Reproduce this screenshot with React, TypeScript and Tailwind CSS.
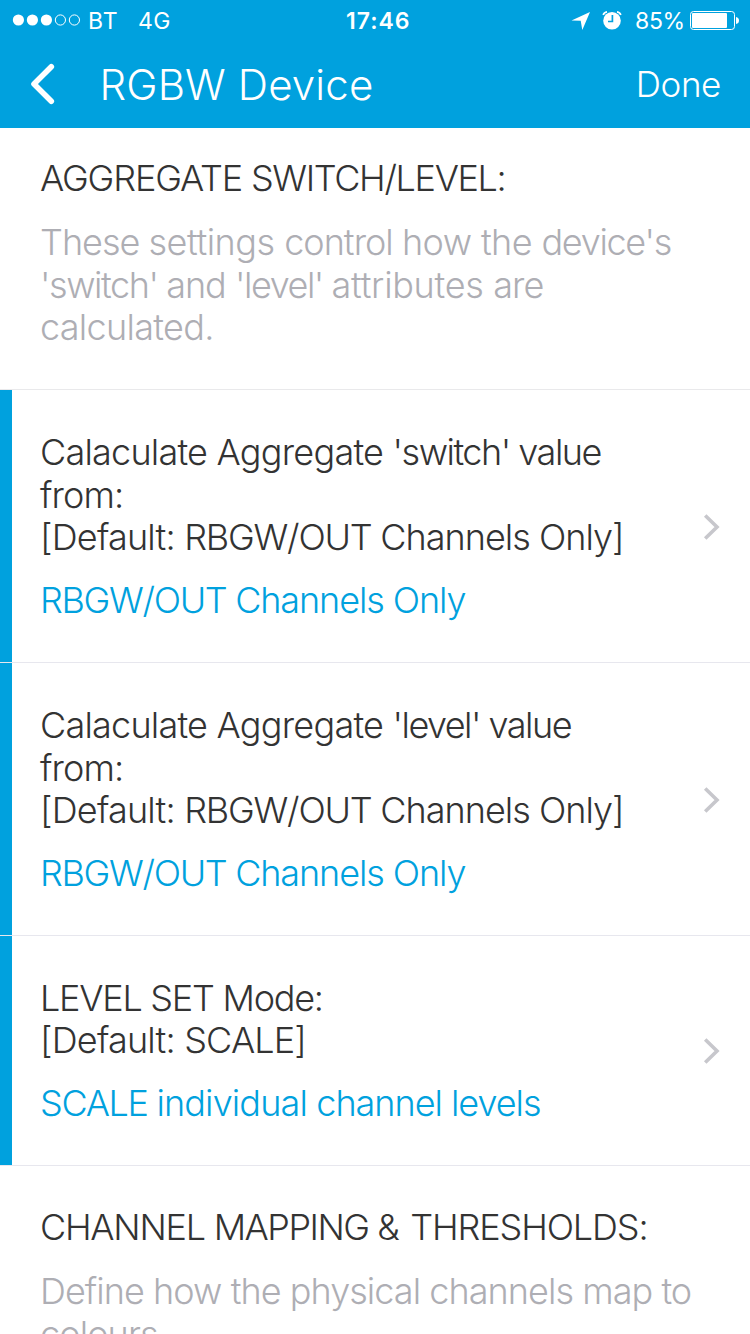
import React from "react";

type Run = [text: string, tracking: string];
type TextLine = Run[];

const AGGREGATE_TITLE: TextLine[] = [
  [["AGGREGATE ", "tracking-[-1.17px]"], ["SWITCH/LEVEL:", "tracking-[-1.35px]"]],
];
const AGGREGATE_TEXT: TextLine[] = [
  [
    ["These ", "tracking-[-1px]"],
    ["settings ", "tracking-[-0.5px]"],
    ["control ", "tracking-[-0.97px]"],
    ["how the ", "tracking-[-0.6px]"],
    ["device's", "tracking-[-1.3px]"],
  ],
  [
    ["'switch' ", "tracking-[-1.45px]"],
    ["and ", "tracking-[-1px]"],
    ["'level' ", "tracking-[-1.45px]"],
    ["attributes ", "tracking-[-0.3px]"],
    ["are", "tracking-[-1px]"],
  ],
  [["calculated.", "tracking-[-0.7px]"]],
];
const CHANNEL_TITLE: TextLine[] = [
  [
    ["CHANNEL ", "tracking-[-1.25px]"],
    ["MAPPING ", "tracking-[-1.5px]"],
    ["& ", "tracking-[0.2px]"],
    ["THRESHOLDS:", "tracking-[-1.12px]"],
  ],
];
const CHANNEL_TEXT: TextLine[] = [
  [["Define how the physical channels map to", "tracking-[-0.95px]"]],
  [["colours.", "tracking-[-0.9px]"]],
];

const FROM: TextLine = [["from:", "tracking-[-0.9px]"]];
const DEFAULT_CHANNELS: TextLine = [
  ["[Default: ", "tracking-[-0.8px]"],
  ["RBGW/OUT ", "tracking-[-1.22px]"],
  ["Channels Only]", "tracking-[-1px]"],
];
const CHANNELS_ONLY: TextLine[] = [
  [["RBGW/OUT ", "tracking-[-1.33px]"], ["Channels Only", "tracking-[-1.1px]"]],
];

const SETTINGS: { label: TextLine[]; value: TextLine[]; row: string; body: string; arrow: string }[] = [
  {
    label: [
      [
        ["Calaculate ", "tracking-[-0.78px]"],
        ["Aggregate ", "tracking-[-0.75px]"],
        ["'switch' ", "tracking-[-1.5px]"],
        ["value", "tracking-[-1.45px]"],
      ],
      FROM,
      DEFAULT_CHANNELS,
    ],
    value: CHANNELS_ONLY,
    row: "h-[273px]",
    body: "pt-[41px]",
    arrow: "pt-0.5",
  },
  {
    label: [
      [
        ["Calaculate ", "tracking-[-0.78px]"],
        ["Aggregate ", "tracking-[-0.75px]"],
        ["'level' ", "tracking-[-1.55px]"],
        ["value", "tracking-[-1.45px]"],
      ],
      FROM,
      DEFAULT_CHANNELS,
    ],
    value: CHANNELS_ONLY,
    row: "h-[273px]",
    body: "pt-[41px]",
    arrow: "pt-0.5",
  },
  {
    label: [
      [["LEVEL SET Mode:", "tracking-[-1.25px]"]],
      [["[Default: ", "tracking-[-0.8px]"], ["SCALE]", "tracking-[-0.85px]"]],
    ],
    value: [[["SCALE ", "tracking-[-1.35px]"], ["individual ", "tracking-[-0.85px]"], ["channel levels", "tracking-[-1.03px]"]]],
    row: "h-[230px]",
    body: "pt-[40.6px]",
    arrow: "pt-0",
  },
];

function Lines({ lines, className }: { lines: TextLine[]; className: string }) {
  return (
    <div className={className}>
      {lines.map((line, i) => (
        <div key={i}>
          {line.map(([text, tracking]) => (
            <span key={text} className={tracking}>
              {text}
            </span>
          ))}
        </div>
      ))}
    </div>
  );
}

function StatusBar() {
  return (
    <div className="flex h-10 items-center text-[23px] leading-[40px] font-normal">
      <svg className="ml-3 h-3 w-[70px] shrink-0" viewBox="0 0 70 12">
        <g fill="#fff">
          <circle cx="6.4" cy="6" r="5.6" />
          <circle cx="20.4" cy="6" r="5.6" />
          <circle cx="34.4" cy="6" r="5.6" />
        </g>
        <g fill="none" stroke="#fff">
          <circle cx="48.4" cy="6" r="5.1" />
          <circle cx="62.4" cy="6" r="5.1" />
        </g>
      </svg>
      <span className="ml-[6px] w-[50px] pt-0.5 tracking-[0.9px]">BT</span>
      <span className="w-[208px] pt-0.5 tracking-[0.4px]">4G</span>
      <span className="w-[225px] pt-0.5 font-semibold tracking-[1px]">17:46</span>
      <svg className="h-5 w-[19px] shrink-0" viewBox="0 0 19 20" fill="#fff">
        <path d="M0.5 10.5 19 2l-7.700 18-1.600-9.200z" />
      </svg>
      <svg className="ml-[12px] h-5 w-5 shrink-0" viewBox="0 0 20 20">
        <circle cx="10" cy="10.800" r="8.800" fill="#fff" />
        <path d="M10.400 5v6.500H6" fill="none" stroke="#00a1de" strokeWidth="1.700" />
        <path d="M1.200 5Q2 2.200 5 1.800M18.800 5Q18 2.200 15 1.800" fill="none" stroke="#fff" strokeWidth="1.700" />
      </svg>
      <span className="ml-[13px] w-[55px] pt-0.5 tracking-[-0.3px]">85%</span>
      <svg className="h-5 w-[50px] shrink-0" viewBox="0 0 50 20">
        <rect x="0.500" y="1.500" width="44" height="18" rx="3" fill="none" stroke="#fff" />
        <rect x="2" y="3" width="35" height="15" rx="1" fill="#fff" />
        <path d="M46 7q3 .5 3 3.500t-3 3.500z" fill="#fff" />
      </svg>
    </div>
  );
}

export default function App() {
  return (
    <div className="h-[1334px] w-[750px] overflow-hidden bg-white font-['Inter','Liberation_Sans',sans-serif] text-[36px] leading-[42.5px] font-light whitespace-pre text-[#333]">
      <header className="h-32 bg-[#00a1de] text-white">
        <StatusBar />
        <div className="flex h-[88px] items-center pr-[29px] pl-[30px]">
          <svg className="h-[42px] w-[26px] shrink-0" viewBox="0 0 26 42" fill="none" stroke="#fff" strokeWidth="5.600" strokeLinecap="round" strokeLinejoin="round">
            <path d="M21.300 3.800 4 21l17.300 17.200" />
          </svg>
          <h1 className="ml-[43.5px] pt-px text-[42px] leading-[52px] tracking-[0.15px]">RGBW Device</h1>
          <button className="ml-auto text-[35px] leading-[44px] font-light tracking-[-0.4px]">Done</button>
        </div>
      </header>
      <section className="h-[262px] border-b border-[#e9e9eb] pt-[29px] pl-[40px]">
        <Lines lines={AGGREGATE_TITLE} className="mb-[21.5px]" />
        <Lines lines={AGGREGATE_TEXT} className="text-[#aeaeb4]" />
      </section>
      {SETTINGS.map((s, i) => (
        <div key={i} className={`flex border-b border-[#e7e7ee] ${s.row}`}>
          <div className="w-3 bg-[#00a1de]" />
          <div className={`flex-1 pl-7 ${s.body}`}>
            <Lines lines={s.label} className="mb-5" />
            <Lines lines={s.value} className="text-[#00a1de]" />
          </div>
          <div className={`flex w-[47px] items-center ${s.arrow}`}>
            <svg className="h-[26px] w-[18px]" viewBox="0 0 18 26" fill="none" stroke="#c7c7cc" strokeWidth="3.600">
              <path d="M2.200 1.500 14 13 2.200 24.500" />
            </svg>
          </div>
        </div>
      ))}
      <section className="pt-[40px] pl-[40px]">
        <Lines lines={CHANNEL_TITLE} className="mb-[21.5px]" />
        <Lines lines={CHANNEL_TEXT} className="text-[#aeaeb4]" />
      </section>
    </div>
  );
}
